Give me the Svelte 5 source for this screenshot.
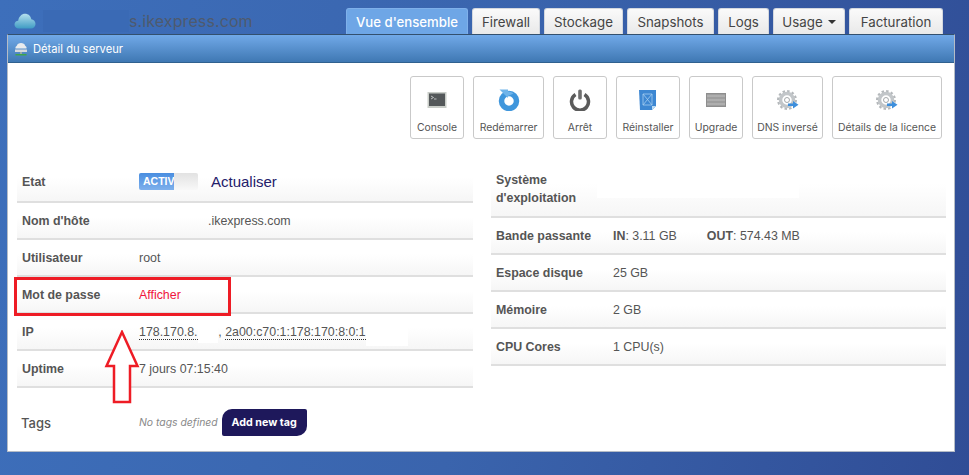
<script>
    const tabs = [
        { label: "Vue d'ensemble", width: 122, active: true },
        { label: "Firewall", width: 68 },
        { label: "Stockage", width: 79 },
        { label: "Snapshots", width: 87 },
        { label: "Logs", width: 51 },
        { label: "Usage", width: 72, caret: true },
        { label: "Facturation", width: 94 }
    ];

    const actions = [
        { label: "Console", icon: "console", width: 54 },
        { label: "Redémarrer", icon: "restart", width: 71 },
        { label: "Arrêt", icon: "power", width: 54 },
        { label: "Réinstaller", icon: "reinstall", width: 64 },
        { label: "Upgrade", icon: "upgrade", width: 54 },
        { label: "DNS inversé", icon: "gear", width: 71 },
        { label: "Détails de la licence", icon: "gear", width: 110 }
    ];

    const usage = [
        { label: "Espace disque", value: "25 GB" },
        { label: "Mémoire", value: "2 GB" },
        { label: "CPU Cores", value: "1 CPU(s)" }
    ];
</script>

<div class="page">
    <header class="top">
        <div class="brand">
            <svg width="22" height="16" viewBox="0 0 22 16">
                <defs>
                    <linearGradient id="cloud" x1="0" y1="0" x2="0" y2="1">
                        <stop offset="0" stop-color="#b5e0ee" />
                        <stop offset="1" stop-color="#3f9cc4" />
                    </linearGradient>
                </defs>
                <path d="M5 15.500C2 15.500 .5 13.500 .5 11.500C.5 9.300 2.300 7.800 4.200 7.800C4.800 3.500 7.800 .8 11 .8C14.300 .8 16.700 3 17.300 6.200C19.800 6.500 21.500 8.500 21.500 11C21.500 13.500 19.500 15.500 17 15.500Z" fill="url(#cloud)" />
            </svg>
            <span class="host"><span class="masked"></span>s.ikexpress.com</span>
        </div>
        <nav class="tabs">
            {#each tabs as tab}
                <div class="tab" class:active={tab.active} style="width: {tab.width}px">
                    {tab.label}
                    {#if tab.caret}<span class="caret"></span>{/if}
                </div>
            {/each}
        </nav>
    </header>

    <section class="panel">
        <div class="panel-head">
            <svg width="14" height="14" viewBox="0 0 14 14">
                <path d="M3 3.500C3 2 5 1 7 1C9 1 11 2 11 3.500L12.500 5V6.500H1.500V5Z" fill="#e8ebee" />
                <rect x="1" y="7.500" width="12" height="2.500" fill="#d5d9dd" />
                <rect x="6" y="10" width="2" height="2" fill="#9aa" />
                <rect x="1.500" y="12" width="11" height="1.500" fill="#3fa34a" />
            </svg>
            <span>Détail du serveur</span>
        </div>

        <div class="panel-body">
            <div class="actions">
                {#each actions as action}
                    <div class="action" style="width: {action.width}px">
                        <div class="icon">
                            {#if action.icon === "console"}
                                <svg width="20" height="20" viewBox="0 0 20 20">
                                    <rect x="0.500" y="2" width="19" height="16" fill="#c9cdc8" />
                                    <rect x="2" y="3.500" width="16" height="12.500" fill="#54585a" />
                                    <path d="M4 6l2.500 1.500L4 9M7 9h2.500" stroke="#d5d8d8" stroke-width="0.800" fill="none" />
                                </svg>
                            {:else if action.icon === "restart"}
                                <svg width="22" height="22" viewBox="0 0 22 22">
                                    <circle cx="11" cy="12" r="7.500" fill="none" stroke="#3f96dc" stroke-width="5.500" />
                                    <path d="M1.500 .5L10 .5L10 9Z" fill="#6fb4ea" />
                                    <path d="M10 2.500C12.500 2.500 14.500 3.500 15.500 4.500L10 7Z" fill="#6fb4ea" />
                                </svg>
                            {:else if action.icon === "power"}
                                <svg width="22" height="22" viewBox="0 0 22 22">
                                    <path d="M6.500 5.500A8.500 8.500 0 1 0 15.500 5.500" fill="none" stroke="#5b5b5b" stroke-width="3.500" />
                                    <rect x="9.200" y="0.500" width="3.600" height="10" rx="1.500" fill="#6f6f6f" />
                                </svg>
                            {:else if action.icon === "reinstall"}
                                <svg width="18" height="20" viewBox="0 0 18 20">
                                    <path d="M0 0H17V16L13 20H1Z" fill="#3d87d2" />
                                    <path d="M13 20V16H17Z" fill="#bcdcf4" />
                                    <path d="M4 4h9v11h-9zM4 4l9 11M13 4L4 15" fill="none" stroke="#a5cdf0" stroke-width="0.800" />
                                </svg>
                            {:else if action.icon === "upgrade"}
                                <svg width="20" height="14" viewBox="0 0 20 14">
                                    <rect width="20" height="14" fill="#8e8e8e" />
                                    <path d="M2 1.500V12.500M4 1.500V12.500M6 1.500V12.500M8 1.500V12.500M10 1.500V12.500M12 1.500V12.500M14 1.500V12.500M16 1.500V12.500M18 1.500V12.500" stroke="#cfcfcf" stroke-width="1" stroke-dasharray="3 1" />
                                </svg>
                            {:else}
                                <svg width="22" height="20" viewBox="0 0 22 20">
                                    <circle cx="10" cy="10" r="6.500" fill="none" stroke="#c2c6c9" stroke-width="3.500" />
                                    <circle cx="10" cy="10" r="9" fill="none" stroke="#b4b8bb" stroke-width="2" stroke-dasharray="2.500 2.200" />
                                    <circle cx="10" cy="10" r="2.500" fill="#fff" stroke="#8f9497" stroke-width="0.800" />
                                    <path d="M11 13.500H16V11L21.500 14.700L16 18.500V16H11Z" fill="#3e8fdc" />
                                </svg>
                            {/if}
                        </div>
                        <span>{action.label}</span>
                    </div>
                {/each}
            </div>

            <div class="columns">
                <div class="info left">
                    <div class="row state">
                        <b>Etat</b>
                        <div class="value status">
                            <span class="toggle"><span class="on">ACTIV</span><span class="off"></span></span>
                            <span class="refresh">Actualiser</span>
                        </div>
                    </div>
                    <div class="row">
                        <b>Nom d'hôte</b>
                        <div class="value hostname">.ikexpress.com</div>
                    </div>
                    <div class="row">
                        <b>Utilisateur</b>
                        <div class="value">root</div>
                    </div>
                    <div class="row">
                        <b>Mot de passe</b>
                        <div class="value reveal">Afficher</div>
                    </div>
                    <div class="row">
                        <b>IP</b>
                        <div class="value ips">
                            <span class="ip">178.170.8.<span class="mask-ip">146</span></span>, <span class="ip">2a00:c70:1:178:170:8:0:1</span>
                            <span class="mask-v6"></span>
                        </div>
                    </div>
                    <div class="row">
                        <b>Uptime</b>
                        <div class="value">7 jours 07:15:40</div>
                    </div>
                    <div class="tags">
                        <span class="tags-label">Tags</span>
                        <em>No tags defined</em>
                        <span class="add-tag">Add new tag</span>
                    </div>
                </div>

                <div class="info right">
                    <div class="row os">
                        <b>Système d'exploitation</b>
                        <div class="value"><span class="mask-os"></span></div>
                    </div>
                    <div class="row">
                        <b>Bande passante</b>
                        <div class="value bandwidth">
                            <span><strong>IN</strong>: 3.11 GB</span>
                            <span><strong>OUT</strong>: 574.43 MB</span>
                        </div>
                    </div>
                    {#each usage as item}
                        <div class="row">
                            <b>{item.label}</b>
                            <div class="value">{item.value}</div>
                        </div>
                    {/each}
                </div>
            </div>
        </div>
    </section>

    <div class="callout"></div>
    <svg class="arrow" width="36" height="76" viewBox="0 0 36 76">
        <path d="M18 2L33.500 36H26V72H10V36H2.500Z" fill="#fff" stroke="#ee1c25" stroke-width="2.500" />
    </svg>
</div>

<style>
    :global(body) {
        margin: 0;
    }

    .page {
        position: relative;
        width: 969px;
        height: 475px;
        overflow: hidden;
        box-sizing: border-box;
        padding: 8px 14px 0 7px;
        background: linear-gradient(100deg, #3d6fbb 0%, #3a64ad 50%, #304d96 100%);
        font-family: Inter, "Open Sans", sans-serif;
        color: #555;
    }

    .top {
        display: flex;
        justify-content: space-between;
        height: 26px;
    }

    .brand {
        display: flex;
        align-items: center;
        gap: 7px;
        padding: 0 0 0 7px;
        height: 22px;
        margin-top: 2px;
    }

    .host {
        display: flex;
        align-items: center;
        font-size: 16px;
        color: #4e5a6e;
        white-space: nowrap;
        letter-spacing: 0.1px;
    }

    .masked {
        display: block;
        width: 86px;
        height: 22px;
        background: #3a6ab5;
    }

    .tabs {
        display: flex;
        gap: 4px;
        margin-right: 12px;
    }

    .tab {
        display: flex;
        justify-content: center;
        align-items: center;
        gap: 5px;
        box-sizing: border-box;
        height: 26px;
        padding-top: 1px;
        background: linear-gradient(#fafafa, #e9e9e9);
        border: 1px solid #d4d8de;
        border-bottom: none;
        border-radius: 3px 3px 0 0;
        font-size: 13.300px;
        color: #444;
        white-space: nowrap;
    }

    .tab.active {
        background: #6ea6e6;
        border-color: #7fb0ea;
        color: #fff;
        font-size: 13.200px;
        font-weight: 500;
    }

    .caret {
        width: 0;
        height: 0;
        border-top: 4px solid #333;
        border-left: 4px solid transparent;
        border-right: 4px solid transparent;
    }

    .panel {
        height: 416px;
        background: #fff;
        border: 1px solid #b5bcc6;
        border-top-color: #33506e;
    }

    .panel-head {
        display: flex;
        align-items: center;
        gap: 5px;
        box-sizing: border-box;
        height: 28px;
        padding: 0 0 0 6px;
        background: linear-gradient(#71a9e8, #3f78b3);
        border-bottom: 1px solid #30618f;
        font-size: 11.200px;
        color: #fff;
    }

    .panel-body {
        padding: 13px 8px 0 9px;
    }

    .actions {
        display: flex;
        justify-content: flex-end;
        gap: 9px;
        padding-right: 4px;
    }

    .action {
        display: flex;
        flex-direction: column;
        align-items: center;
        box-sizing: border-box;
        height: 63px;
        padding-top: 12px;
        border: 1px solid #c9c9c9;
        border-radius: 3px;
        font-size: 10.400px;
        color: #555;
        white-space: nowrap;
    }

    .icon {
        display: flex;
        align-items: center;
        justify-content: center;
        height: 22px;
        margin-bottom: 10px;
    }

    .columns {
        display: flex;
        gap: 18px;
        margin-top: 23px;
    }

    .info {
        font-family: "Liberation Sans", Arial, sans-serif;
        font-size: 12.400px;
    }

    .left {
        flex: none;
        width: 456px;
    }

    .right {
        flex: 1;
    }

    .row {
        display: flex;
        align-items: center;
        height: 37px;
        box-sizing: border-box;
        background: linear-gradient(#fff 40%, #f6f6f6);
        border-bottom: 2px solid #dfdfdf;
    }

    .row b {
        flex: none;
        width: 122px;
        padding-left: 5px;
        box-sizing: border-box;
        color: #555;
    }

    .value {
        color: #555;
        white-space: nowrap;
    }

    .state {
        height: 41px;
    }

    .status {
        display: flex;
        align-items: center;
        gap: 13px;
    }

    .toggle {
        display: flex;
        width: 59px;
        height: 17px;
        border-radius: 2px;
        overflow: hidden;
        background: linear-gradient(#e2e2e2, #f8f8f8);
    }

    .on {
        width: 35px;
        background: linear-gradient(#4a8ee0, #7eb0ec);
        color: #fff;
        font-size: 10.500px;
        font-weight: bold;
        line-height: 17px;
        padding-left: 4px;
        box-sizing: border-box;
        overflow: hidden;
    }

    .refresh {
        font-size: 15px;
        color: #24206a;
    }

    .hostname {
        padding-left: 69px;
    }

    .reveal {
        color: #f0143c;
    }

    .ips {
        position: relative;
    }

    .ip {
        border-bottom: 1px dotted #333;
    }

    .mask-ip {
        color: transparent;
        background: #fff;
        padding: 4px 0 4px;
    }

    .mask-v6 {
        position: absolute;
        left: 227px;
        top: -5px;
        width: 42px;
        height: 26px;
        background: #fff;
    }

    .tags {
        display: flex;
        align-items: center;
        height: 27px;
        margin-top: 21px;
    }

    .tags-label {
        width: 122px;
        padding-left: 4px;
        box-sizing: border-box;
        font-family: Inter, sans-serif;
        font-size: 13px;
        font-weight: 500;
        color: #555;
    }

    .tags em {
        font-family: Inter, sans-serif;
        font-size: 10.400px;
        color: #888;
    }

    .add-tag {
        display: flex;
        align-items: center;
        box-sizing: border-box;
        width: 85px;
        justify-content: center;
        height: 27px;
        margin-left: 4px;
        background: #1e185b;
        border-radius: 10px 2px 10px 2px;
        color: #fff;
        font-family: Inter, sans-serif;
        font-size: 10.700px;
        font-weight: 700;
    }

    .os {
        height: 56px;
    }

    .os b {
        line-height: 18px;
    }

    .os .value {
        margin-left: -16px;
    }

    .mask-os {
        display: block;
        width: 202px;
        height: 28px;
        margin-bottom: 10px;
        background: #fff;
    }

    .bandwidth {
        display: flex;
        gap: 30px;
    }

    .bandwidth strong {
        font-weight: bold;
    }

    .callout {
        position: absolute;
        left: 14px;
        top: 277px;
        width: 211px;
        height: 33px;
        border: 3px solid #ee1c25;
    }

    .arrow {
        position: absolute;
        left: 104px;
        top: 330px;
        background: transparent;
    }
</style>
